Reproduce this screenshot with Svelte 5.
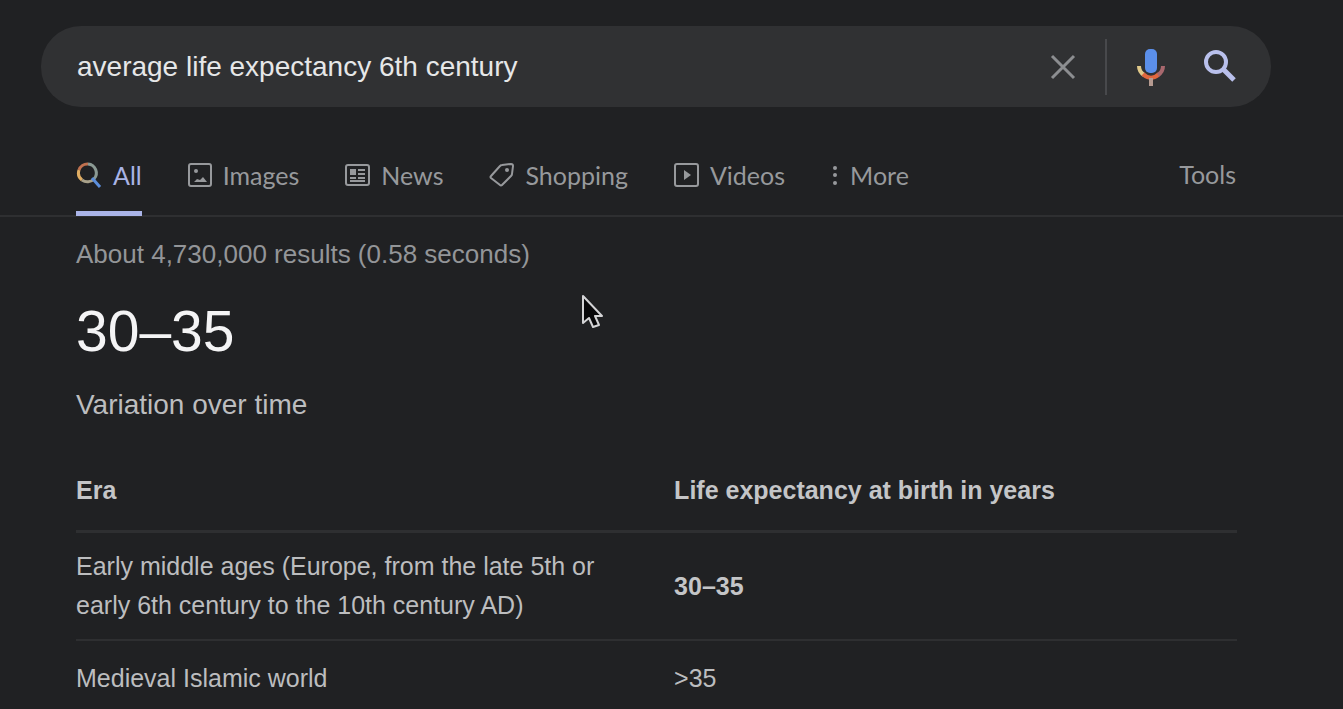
<script>
  let query = 'average life expectancy 6th century';
  let activeTab = 'all';

  const tabs = [
    { id: 'all', label: 'All' },
    { id: 'images', label: 'Images' },
    { id: 'news', label: 'News' },
    { id: 'shopping', label: 'Shopping' },
    { id: 'videos', label: 'Videos' },
    { id: 'more', label: 'More' }
  ];

  const rows = [
    {
      era: 'Early middle ages (Europe, from the late 5th or early 6th century to the 10th century AD)',
      years: '30–35',
      highlight: true
    },
    { era: 'Medieval Islamic world', years: '>35', highlight: false }
  ];

  function clearQuery() {
    query = '';
  }
</script>

<div class="page">
  <form class="search-bar" role="search" on:submit|preventDefault>
    <input type="text" aria-label="Search" autocomplete="off" spellcheck="false" bind:value={query} />
    <button type="button" class="clear" aria-label="Clear" on:click={clearQuery}>
      <svg width="28" height="28" viewBox="0 0 28 28" fill="none" stroke="#8c8e91" stroke-width="3">
        <path d="M3 3l22 22M25 3L3 25" />
      </svg>
    </button>
    <span class="separator"></span>
    <button type="button" class="voice" aria-label="Search by voice">
      <svg width="28" height="38" viewBox="0 0 28 38" fill="none">
        <rect x="8" y="1" width="12" height="24" rx="5" fill="#5b8fea" />
        <path d="M2 18c0 4 2 7 5 9" stroke="#e0c98a" stroke-width="4" />
        <path d="M6 26c5 5 11 5 16 0" stroke="#e0673e" stroke-width="4" />
        <path d="M21 27c3-2 5-5 5-9" stroke="#a8686e" stroke-width="4" />
        <path d="M14 30v8" stroke="#b59a90" stroke-width="4" />
      </svg>
    </button>
    <button type="submit" class="submit" aria-label="Search">
      <svg width="34" height="34" viewBox="0 0 34 34" fill="none" stroke="#b9c0ec">
        <circle cx="13" cy="12" r="10" stroke-width="4" />
        <path d="M20 19l11 11" stroke-width="5" />
      </svg>
    </button>
  </form>

  <nav class="tabs">
    {#each tabs as tab}
      <a
        href="#{tab.id}"
        class="tab"
        class:active={activeTab === tab.id}
        on:click|preventDefault={() => (activeTab = tab.id)}
      >
        {#if tab.id === 'all'}
          <svg width="26" height="26" viewBox="0 0 26 26" fill="none" stroke-width="3">
            <path d="M18 17A9 9 0 0 0 12 2" stroke="#8b9a94" />
            <path d="M12 2A9 9 0 0 0 3 8" stroke="#c0714f" />
            <path d="M3 8A9 9 0 0 0 6 18" stroke="#e0ad63" />
            <path d="M6 18A9 9 0 0 0 18 17" stroke="#a8a18a" />
            <path d="M16 16l8 9" stroke="#5c8fdc" />
          </svg>
        {:else if tab.id === 'images'}
          <svg width="24" height="26" viewBox="0 0 24 26" fill="none" stroke="currentColor" stroke-width="2">
            <rect x="1" y="2" width="22" height="22" rx="2" />
            <circle cx="8" cy="9" r="2" fill="currentColor" stroke="none" />
            <path d="M6 20l3-3 3 1 3-3 4 5z" fill="currentColor" stroke="none" />
          </svg>
        {:else if tab.id === 'news'}
          <svg width="25" height="26" viewBox="0 0 25 26" fill="none" stroke="currentColor" stroke-width="2">
            <rect x="1" y="3" width="23" height="20" rx="2" />
            <rect x="5" y="7" width="6" height="6" fill="currentColor" stroke="none" />
            <path d="M13 8h7M13 12h7M5 16h6M13 16h7M5 19h15" />
          </svg>
        {:else if tab.id === 'shopping'}
          <svg width="25" height="26" viewBox="0 0 25 26" fill="none" stroke="currentColor" stroke-width="2" stroke-linejoin="round">
            <path d="M13 3L22 2Q24 2 24 4L23 12Q23 13 22 14L13 23Q12 24 11 23L2 16Q1 15 2 14L11 4Q12 3 13 3z" />
            <circle cx="18" cy="8" r="2" fill="currentColor" stroke="none" />
          </svg>
        {:else if tab.id === 'videos'}
          <svg width="25" height="26" viewBox="0 0 25 26" fill="none" stroke="currentColor" stroke-width="2">
            <rect x="1" y="2" width="23" height="22" rx="2" />
            <path d="M10 8v10l7-5z" fill="currentColor" stroke="none" />
          </svg>
        {:else}
          <svg width="8" height="26" viewBox="0 0 8 26" fill="currentColor">
            <circle cx="4" cy="6" r="2" />
            <circle cx="4" cy="13" r="2" />
            <circle cx="4" cy="21" r="2" />
          </svg>
        {/if}
        <span>{tab.label}</span>
      </a>
    {/each}
    <button type="button" class="tools">Tools</button>
  </nav>

  <main>
    <p class="stats">About 4,730,000 results (0.58 seconds)</p>
    <h1>30–35</h1>
    <h2>Variation over time</h2>

    <table>
      <thead>
        <tr>
          <th scope="col" class="era">Era</th>
          <th scope="col">Life expectancy at birth in years</th>
        </tr>
      </thead>
      <tbody>
        {#each rows as row}
          <tr>
            <td class="era">{row.era}</td>
            <td class:highlight={row.highlight}>{row.years}</td>
          </tr>
        {/each}
      </tbody>
    </table>
  </main>

  <!-- pointer floating over the results -->
  <svg class="pointer" width="24" height="36" viewBox="0 0 24 36" aria-hidden="true">
    <path d="M3 2v27l6-5 4 9 6-2-4-9h7z" fill="#08080a" stroke="#d4d4d6" stroke-width="2" stroke-linejoin="round" />
  </svg>
</div>

<style>
  :global(html) {
    scrollbar-width: none;
    background: #202123;
  }

  :global(body) {
    margin: 0;
    background: #202123;
  }

  .page {
    position: relative;
    padding-top: 26px;
    font-family: "Liberation Sans", Arial, sans-serif;
    color: #bcbdbf;
  }

  button {
    padding: 0;
    border: 0;
    background: none;
    cursor: pointer;
  }

  svg {
    display: block;
    flex: none;
  }

  .search-bar {
    display: flex;
    align-items: center;
    height: 81px;
    box-sizing: border-box;
    margin: 0 72px 0 41px;
    padding: 0 34px 0 36px;
    border-radius: 40px;
    background: #303133;
  }

  .search-bar input {
    flex: 1;
    min-width: 0;
    padding: 0;
    border: 0;
    outline: 0;
    background: none;
    color: #e6e7e8;
    font-family: inherit;
    font-size: 28px;
  }

  .separator {
    width: 2px;
    height: 56px;
    margin: 0 30px 0 28px;
    background: #48494c;
  }

  .submit {
    margin-left: 38px;
  }

  .tabs {
    display: flex;
    align-items: stretch;
    gap: 46px;
    height: 82px;
    margin-top: 26px;
    padding: 0 107px 0 76px;
    border-bottom: 2px solid #2e2f31;
    font-family: Lato, "Open Sans", sans-serif;
    font-size: 25px;
  }

  .tab {
    display: flex;
    align-items: center;
    gap: 11px;
    margin-bottom: -1px;
    padding-top: 5px;
    border-bottom: 5px solid transparent;
    color: #97999c;
    text-decoration: none;
  }

  .tab.active {
    border-bottom-color: #aab4e8;
    color: #a9b4e6;
  }

  .tools {
    margin-left: auto;
    color: #97999c;
    font: inherit;
  }

  main {
    padding: 0 106px 0 76px;
  }

  p,
  h1,
  h2 {
    margin: 0;
    font-weight: 400;
  }

  .stats {
    padding-top: 17px;
    color: #939598;
    font-size: 26px;
    line-height: 40px;
  }

  h1 {
    padding-top: 22px;
    color: #f4f4f5;
    font-size: 57px;
    line-height: 70px;
  }

  h2 {
    padding-top: 19px;
    font-size: 28px;
    line-height: 40px;
  }

  table {
    width: 100%;
    margin-top: 26px;
    border-collapse: separate;
    border-spacing: 0;
    table-layout: fixed;
    font-size: 25px;
    line-height: 39px;
  }

  th,
  td {
    height: 74px;
    box-sizing: border-box;
    padding: 14px 0 14px 6px;
    text-align: left;
    vertical-align: middle;
  }

  th {
    height: 82px;
    color: #c4c5c7;
    border-bottom: 3px solid #2e2f31;
  }

  tbody tr:not(:last-child) td {
    border-bottom: 2px solid #2e2f31;
  }

  th.era,
  td.era {
    width: 51%;
    padding-left: 0;
    padding-right: 60px;
  }

  .highlight {
    font-weight: 700;
    color: #c4c5c7;
  }

  .pointer {
    position: absolute;
    top: 294px;
    left: 580px;
  }
</style>
